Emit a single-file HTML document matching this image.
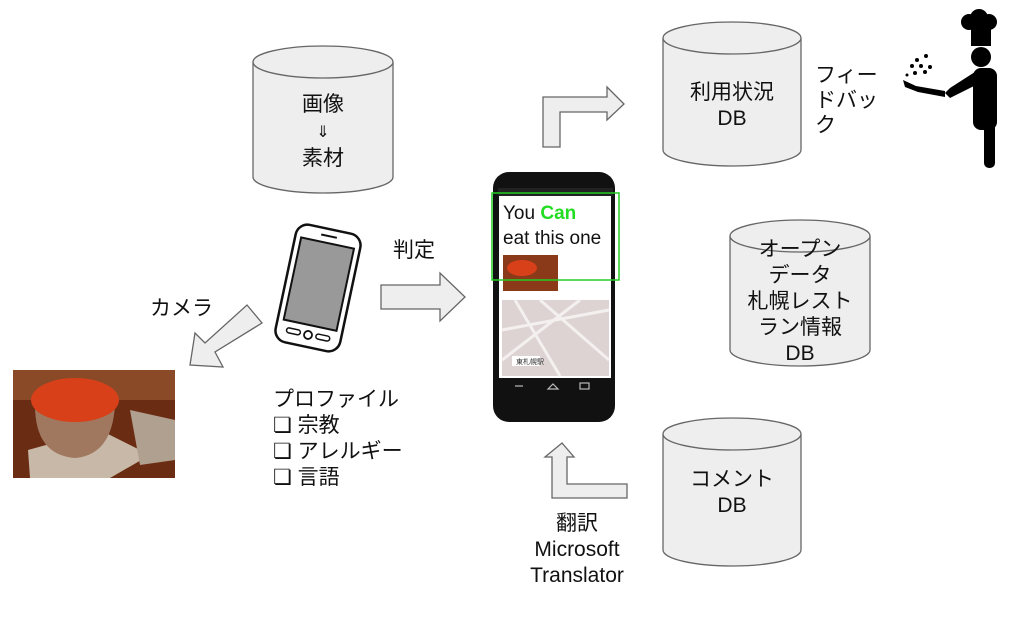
<!DOCTYPE html>
<html><head><meta charset="utf-8"><style>
body{margin:0;width:1019px;height:617px;background:#fff;overflow:hidden;position:relative;font-family:"Liberation Sans","Noto Sans CJK JP",sans-serif;color:#111}
.t{position:absolute;font-size:21px;line-height:26px;text-align:center;white-space:nowrap}
</style></head><body>
<svg width="1019" height="617" style="position:absolute;left:0;top:0">
<g fill="#eeeeee" stroke="#666" stroke-width="1.3">
<path d="M253 62 V177 A70 16 0 0 0 393 177 V62"/><ellipse cx="323" cy="62" rx="70" ry="16"/>
<path d="M663 38 V150 A69 16 0 0 0 801 150 V38"/><ellipse cx="732" cy="38" rx="69" ry="16"/>
<path d="M730 236 V350 A70 16 0 0 0 870 350 V236"/><ellipse cx="800" cy="236" rx="70" ry="16"/>
<path d="M663 434 V550 A69 16 0 0 0 801 550 V434"/><ellipse cx="732" cy="434" rx="69" ry="16"/>
<path d="M543 147 V97 H607 V87 L624 104 L607 120 V112 H560 V147 Z"/>
<path d="M381 285 H440 V273 L465 297 L440 321 V309 H381 Z"/>
<path d="M247 305 L262 323 L215 352 L223 367 L190 365 L195 333 L205 343 Z"/>
<path d="M562 443 L574 457 H567 V484 H627 V498 H552 V457 H545 Z"/>
</g>
<g transform="rotate(12 318 288)">
<rect x="285" y="228" width="66" height="120" rx="12" fill="#fff" stroke="#111" stroke-width="2.5"/>
<rect x="291" y="242" width="54" height="84" fill="#999" stroke="#111" stroke-width="2"/>
<line x1="310" y1="235" x2="326" y2="235" stroke="#111" stroke-width="2"/>
<circle cx="318" cy="336" r="4" fill="none" stroke="#111" stroke-width="1.8"/>
<rect x="296" y="333" width="14" height="5" rx="2.5" fill="none" stroke="#111" stroke-width="1.5"/>
<rect x="326" y="333" width="14" height="5" rx="2.5" fill="none" stroke="#111" stroke-width="1.5"/>
</g>
<rect x="13" y="370" width="162" height="108" fill="#6a2c12"/>
<rect x="13" y="370" width="162" height="30" fill="#8a4a28"/>
<path d="M28 450 L100 430 L150 455 L110 478 H30 Z" fill="#c8b8a8"/>
<path d="M130 410 L175 420 V460 L140 465 Z" fill="#b0a090"/>
<path d="M35 405 Q35 455 75 458 Q112 455 115 405 Z" fill="#a07860"/>
<ellipse cx="75" cy="400" rx="44" ry="22" fill="#d8401a"/>
<rect x="493" y="172" width="122" height="250" rx="16" fill="#111"/>
<rect x="498" y="188" width="115" height="8" fill="#222"/>
<rect x="499" y="196" width="112" height="182" fill="#fff"/>
<rect x="499" y="378" width="112" height="16" fill="#111"/>
<rect x="503" y="255" width="55" height="36" fill="#8a3a18"/>
<ellipse cx="522" cy="268" rx="15" ry="8" fill="#d8401a"/>
<rect x="502" y="300" width="107" height="76" fill="#ddd3d3"/>
<path d="M502 330 L609 310 M515 300 L560 376 M540 300 L609 360 M502 360 L580 300" stroke="#f4f0f0" stroke-width="3"/>
<rect x="512" y="356" width="28" height="10" fill="#fff"/>
<text x="516" y="364" font-size="7" fill="#333">東札幌駅</text>
<rect x="492" y="193" width="127" height="87" fill="none" stroke="#22cc22" stroke-width="1.5"/>
<g stroke="#bbb" fill="none" stroke-width="1.2"><path d="M515 386 h8"/><path d="M548 389 l5 -5 l5 5 z"/><rect x="580" y="383" width="9" height="6"/></g>
<g fill="#000">
<circle cx="969" cy="22" r="8"/><circle cx="989" cy="22" r="8"/><circle cx="979" cy="18" r="9"/>
<rect x="971" y="22" width="20" height="24"/>
<circle cx="981" cy="57" r="10"/>
<rect x="973" y="68" width="24" height="62" rx="8"/>
<path d="M978 70 L950 88 L945 93 L950 98 L982 82 Z"/>
<rect x="984" y="120" width="11" height="48" rx="5"/>
<path d="M945 91 L916 86 L903 80 L905 87 L918 92 L945 97 Z"/>
<circle cx="917" cy="60" r="2"/><circle cx="926" cy="56" r="2"/><circle cx="912" cy="66" r="2"/><circle cx="921" cy="66" r="2"/><circle cx="930" cy="67" r="2"/><circle cx="915" cy="73" r="2"/><circle cx="925" cy="72" r="2"/><circle cx="907" cy="75" r="1.5"/>
</g>
</svg>
<div class="t" style="left:273px;top:92px;width:100px">画像<br><span style="font-size:16px;line-height:26px">⇓</span><br>素材</div>
<div class="t" style="left:672px;top:80px;width:120px">利用状況<br>DB</div>
<div class="t" style="left:740px;top:237px;width:120px">オープン<br>データ<br>札幌レスト<br>ラン情報<br>DB</div>
<div class="t" style="left:672px;top:467px;width:120px">コメント<br>DB</div>
<div class="t" style="left:815px;top:63px;text-align:left;line-height:25px">フィー<br>ドバッ<br>ク</div>
<div class="t" style="left:393px;top:238px">判定</div>
<div class="t" style="left:150px;top:296px">カメラ</div>
<div class="t" style="left:273px;top:387px;text-align:left">プロファイル<br>❏ 宗教<br>❏ アレルギー<br>❏ 言語</div>
<div class="t" style="left:517px;top:511px;width:120px">翻訳<br>Microsoft<br>Translator</div>
<div class="t" style="left:503px;top:201px;text-align:left;font-size:19px;line-height:25px">You <b style="color:#22dd22">Can</b><br>eat this one</div>
</body></html>
